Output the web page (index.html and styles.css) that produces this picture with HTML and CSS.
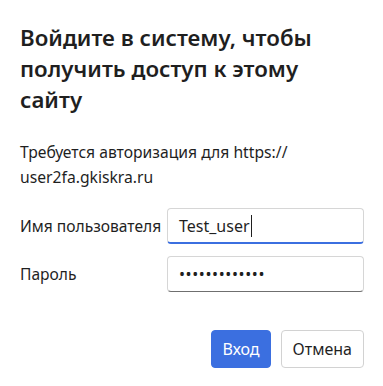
FILE: index.html
```html
<!DOCTYPE html>
<html>

<head>
    <meta charset="utf-8">
    <title>Вход</title>
    <link rel="stylesheet" href="styles.css">
</head>

<body>
    <div class="dialog">
        <h1>Войдите в систему, чтобы получить доступ к этому сайту</h1>
        <p class="info">Требуется авторизация для https://<br>user2fa.gkiskra.ru</p>
        <div class="field">
            <label class="label" for="user">Имя пользователя</label>
            <div class="input focused" id="user">Test_user<span class="caret"></span></div>
        </div>
        <div class="field">
            <label class="label" for="pass">Пароль</label>
            <div class="input" id="pass">&#8226;&#8226;&#8226;&#8226;&#8226;&#8226;&#8226;&#8226;&#8226;&#8226;&#8226;&#8226;&#8226;</div>
        </div>
        <div class="button-container">
            <button class="button primary">Вход</button>
            <button class="button">Отмена</button>
        </div>
    </div>
</body>

</html>
```

FILE: styles.css
```css
body {
    font-family: "Noto Sans", "Open Sans", sans-serif;
    background: #ffffff;
    margin: 0;
    padding: 0;
}

.dialog {
    padding: 22px 19px 17px 20px;
    color: #1f1f1f;
}

h1 {
    font-size: 22.3px;
    font-weight: 600;
    line-height: 31px;
    margin: 0 0 25px 0;
    max-width: 320px;
    color: #1f1f1f;
}

.info {
    font-size: 15.7px;
    line-height: 25px;
    margin: 0 0 18px 0;
    color: #1f1f1f;
}

.field {
    display: flex;
    align-items: center;
    justify-content: space-between;
    margin-bottom: 12px;
}

.label {
    font-size: 15.6px;
}

.input {
    box-sizing: border-box;
    width: 197px;
    height: 36px;
    border: 1px solid #d6d6d6;
    border-bottom: 1px solid #6f6f6f;
    border-radius: 4px;
    padding: 0 11px;
    font-size: 16px;
    display: flex;
    align-items: center;
    color: #1f1f1f;
    letter-spacing: 0.6px;
}

.input.focused {
    border-bottom: 2px solid #3b6fe0;
    letter-spacing: 0;
}

.caret {
    display: inline-block;
    width: 1px;
    height: 22px;
    background: #1f1f1f;
    margin-left: 1px;
}

.button-container {
    display: flex;
    justify-content: flex-end;
    gap: 10px;
    margin-top: 38px;
}

.button {
    height: 38px;
    padding: 0 11px;
    font-family: inherit;
    font-size: 16px;
    background: #ffffff;
    color: #1f1f1f;
    border: 1px solid #d2d2d2;
    border-radius: 4px;
}

.button.primary {
    padding: 0 10px;
    background: #3b6fe0;
    border-color: #3b6fe0;
    color: #ffffff;
}
```
